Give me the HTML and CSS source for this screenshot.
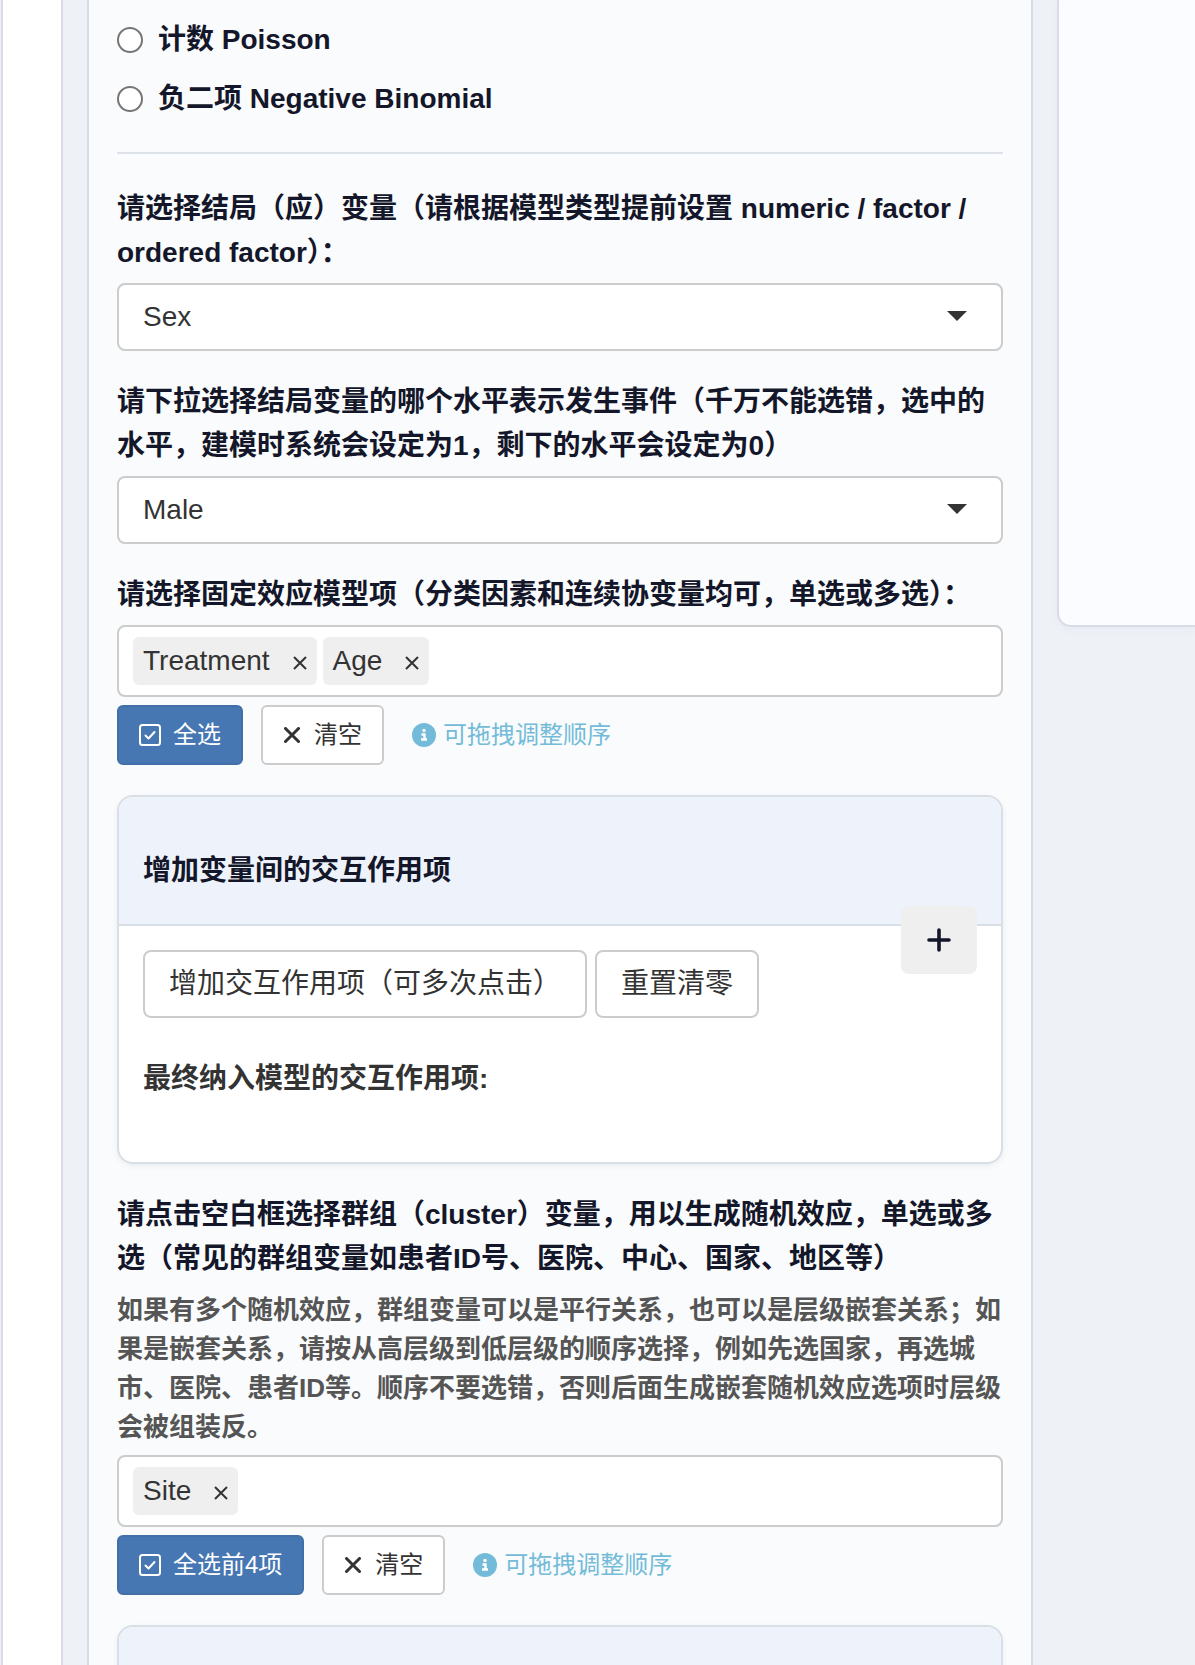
FILE: index.html
```html
<!DOCTYPE html>
<html lang="zh-CN">

<head>
    <meta charset="utf-8">
    <title>混合效应模型</title>
    <link rel="stylesheet" href="styles.css">
</head>

<body>
    <svg class="sprite" aria-hidden="true">
        <symbol id="icon-check" viewBox="0 0 22 22">
            <rect x="1" y="1" width="20" height="20" rx="2.5" fill="none" stroke="currentColor" stroke-width="2" />
            <path d="M6.5 11.5l3 3 6-6.5" fill="none" stroke="currentColor" stroke-width="2" stroke-linecap="round" stroke-linejoin="round" />
        </symbol>
        <symbol id="icon-cross" viewBox="0 0 16 16">
            <path d="M1.5 1.5l13 13M14.5 1.5l-13 13" fill="none" stroke="currentColor" stroke-width="3" stroke-linecap="round" />
        </symbol>
        <symbol id="icon-remove" viewBox="0 0 14 14">
            <path d="M1 1l12 12M13 1L1 13" fill="none" stroke="currentColor" stroke-width="2" />
        </symbol>
        <symbol id="icon-info" viewBox="0 0 24 24">
            <circle cx="12" cy="12" r="12" fill="currentColor" />
            <circle cx="12" cy="7.5" r="1.7" fill="#fff" />
            <path d="M9.5 11.5h3v5M9 16.5h6" fill="none" stroke="#fff" stroke-width="2.4" />
        </symbol>
        <symbol id="icon-plus" viewBox="0 0 24 24">
            <path d="M12 2v20M2 12h20" fill="none" stroke="currentColor" stroke-width="3.6" stroke-linecap="round" />
        </symbol>
        <symbol id="icon-caret" viewBox="0 0 20 10">
            <path d="M0 0h20L10 10z" fill="currentColor" />
        </symbol>
    </svg>

    <div class="page">
        <aside class="sidebar"></aside>

        <main class="panel">
            <form>
                <div class="radio-group">
                    <label class="radio"><input type="radio" name="modelType" value="poisson">计数 Poisson</label>
                    <label class="radio"><input type="radio" name="modelType" value="nb">负二项 Negative Binomial</label>
                </div>

                <hr>

                <div class="form-group">
                    <label class="control-label" for="outcome">请选择结局（应）变量（请根据模型类型提前设置 numeric / factor / ordered factor）：</label>
                    <div class="select-wrap">
                        <select id="outcome">
                            <option>Sex</option>
                        </select>
                        <svg class="caret"><use href="#icon-caret" /></svg>
                    </div>
                </div>

                <div class="form-group">
                    <label class="control-label" for="eventLevel">请下拉选择结局变量的哪个水平表示发生事件（千万不能选错，选中的水平，建模时系统会设定为1，剩下的水平会设定为0）</label>
                    <div class="select-wrap">
                        <select id="eventLevel">
                            <option>Male</option>
                        </select>
                        <svg class="caret"><use href="#icon-caret" /></svg>
                    </div>
                </div>

                <div class="form-group">
                    <label class="control-label" for="fixedTerms">请选择固定效应模型项（分类因素和连续协变量均可，单选或多选）：</label>
                    <div class="multi">
                        <span class="chip">Treatment<button type="button" aria-label="移除 Treatment"><svg><use href="#icon-remove" /></svg></button></span>
                        <span class="chip">Age<button type="button" aria-label="移除 Age"><svg><use href="#icon-remove" /></svg></button></span>
                        <input type="text" id="fixedTerms">
                    </div>
                    <div class="actions">
                        <button type="button" class="btn-small primary"><svg class="check"><use href="#icon-check" /></svg>全选</button>
                        <button type="button" class="btn-small"><svg class="cross"><use href="#icon-cross" /></svg>清空</button>
                        <span class="hint"><svg><use href="#icon-info" /></svg>可拖拽调整顺序</span>
                    </div>
                </div>

                <section class="card">
                    <div class="card-header">
                        <h3>增加变量间的交互作用项</h3>
                    </div>
                    <button type="button" class="collapse-btn" aria-label="展开"><svg><use href="#icon-plus" /></svg></button>
                    <div class="card-body">
                        <div class="card-buttons">
                            <button type="button" class="btn">增加交互作用项（可多次点击）</button>
                            <button type="button" class="btn">重置清零</button>
                        </div>
                        <p>最终纳入模型的交互作用项:</p>
                    </div>
                </section>

                <div class="form-group">
                    <label class="control-label" for="clusterTerms">请点击空白框选择群组（cluster）变量，用以生成随机效应，单选或多选（常见的群组变量如患者ID号、医院、中心、国家、地区等）</label>
                    <p class="help">如果有多个随机效应，群组变量可以是平行关系，也可以是层级嵌套关系；如果是嵌套关系，请按从高层级到低层级的顺序选择，例如先选国家，再选城市、医院、患者ID等。顺序不要选错，否则后面生成嵌套随机效应选项时层级会被组装反。</p>
                    <div class="multi">
                        <span class="chip">Site<button type="button" aria-label="移除 Site"><svg><use href="#icon-remove" /></svg></button></span>
                        <input type="text" id="clusterTerms">
                    </div>
                    <div class="actions">
                        <button type="button" class="btn-small primary"><svg class="check"><use href="#icon-check" /></svg>全选前4项</button>
                        <button type="button" class="btn-small"><svg class="cross"><use href="#icon-cross" /></svg>清空</button>
                        <span class="hint"><svg><use href="#icon-info" /></svg>可拖拽调整顺序</span>
                    </div>
                </div>

                <section class="card">
                    <div class="card-header"></div>
                </section>
            </form>
        </main>

        <section class="result"></section>
    </div>
</body>

</html>
```

FILE: styles.css
```css
* {
    box-sizing: border-box;
}

body {
    margin: 0;
    background-color: #eef1f6;
    color: #333;
    font-family: "Liberation Sans", "Noto Sans CJK SC", sans-serif;
    font-size: 28px;
    line-height: 44px;
}

button,
input,
select {
    font: inherit;
    color: inherit;
}

button {
    cursor: pointer;
}

.sprite {
    display: none;
}

/* 三栏：左侧导航、参数面板、结果区 */
.page {
    display: grid;
    grid-template-columns: 62px minmax(0, 1fr) 138px;
    gap: 24px;
    height: 100vh;
    padding-left: 1px;
    overflow: hidden;
}

.sidebar {
    background-color: #fff;
    border: solid #d9dce6;
    border-width: 0 2px;
}

.panel {
    padding: 18px 28px 0;
    background-color: #f9fbfc;
    border: solid #d9dce6;
    border-width: 0 2px;
}

.result {
    height: 627px;
    background-color: #fafcff;
    border: solid #d9dce6;
    border-width: 0 0 2px 2px;
    border-bottom-left-radius: 14px;
    box-shadow: 0 2px 8px rgba(80, 100, 200, 0.06);
}

/* 单选 */
.radio-group {
    display: flex;
    flex-direction: column;
    gap: 15px;
}

.radio {
    display: flex;
    align-items: center;
    gap: 15px;
    color: #14162a;
    font-weight: bold;
}

.radio input {
    appearance: none;
    width: 26px;
    height: 26px;
    margin: 0;
    background-color: #fff;
    border: 2px solid #767676;
    border-radius: 50%;
}

.radio input:checked {
    border-width: 8px;
}

hr {
    height: 2px;
    margin: 31px 0 33px;
    background-color: #dde2e8;
    border: none;
}

.form-group {
    margin-bottom: 29px;
}

.control-label {
    display: block;
    margin-bottom: 8px;
    color: #14162a;
    font-weight: bold;
}

.help {
    margin: 10px 0 8px;
    color: #555;
    font-size: 26px;
    font-weight: bold;
    line-height: 39px;
}

/* 下拉框 */
.select-wrap {
    position: relative;
}

select {
    appearance: none;
    display: block;
    width: 100%;
    height: 68px;
    padding: 0 64px 0 24px;
    background-color: #fff;
    border: 2px solid #ccc;
    border-radius: 8px;
}

.caret {
    position: absolute;
    top: 28px;
    right: 36px;
    width: 20px;
    height: 10px;
    pointer-events: none;
}

/* 多选框 */
.multi {
    display: flex;
    gap: 6px;
    padding: 10px 14px;
    background-color: #fff;
    border: 2px solid #ccc;
    border-radius: 8px;
}

.multi input {
    flex: 1;
    min-width: 0;
    height: 48px;
    padding: 0;
    background: none;
    border: none;
    outline: none;
}

.chip {
    display: flex;
    align-items: center;
    gap: 23px;
    height: 48px;
    padding: 0 10px;
    background-color: #efefef;
    border-radius: 6px;
}

.chip button {
    display: flex;
    padding: 4px 0 0;
    background: none;
    border: none;
}

.chip svg {
    width: 14px;
    height: 14px;
}

/* 按钮 */
.actions {
    display: flex;
    align-items: center;
    gap: 18px;
    margin: 8px 0 30px;
    font-size: 24px;
}

.btn,
.btn-small {
    background-color: #fff;
    border: 2px solid #ccc;
    border-radius: 8px;
}

.btn {
    height: 68px;
    padding: 0 24px;
}

.btn-small {
    display: flex;
    align-items: center;
    gap: 12px;
    height: 60px;
    padding: 0 20px;
    border-radius: 6px;
}

.primary {
    background-color: #4677b3;
    border-color: #426fa8;
    color: #fff;
}

.check {
    width: 22px;
    height: 22px;
}

.cross {
    width: 16px;
    height: 16px;
    margin: 0 2px 0 1px;
}

.hint {
    display: flex;
    align-items: center;
    gap: 7px;
    margin-left: 10px;
    color: #74bbd9;
}

.hint svg {
    width: 24px;
    height: 24px;
}

/* 折叠卡片 */
.card {
    position: relative;
    margin-bottom: 29px;
    background-color: #fff;
    border: 2px solid #d9dfe6;
    border-radius: 16px;
    box-shadow: 0 2px 6px rgba(20, 30, 60, 0.06);
}

.card-header {
    min-height: 129px;
    padding: 52px 24px 31px;
    background-color: #eef3fb;
    border-bottom: 2px solid #d9dfe6;
    border-radius: 14px 14px 0 0;
}

.card-header h3 {
    margin: 0;
    color: #14162a;
    font-size: 28px;
    font-weight: bold;
}

.collapse-btn {
    position: absolute;
    top: 109px;
    right: 24px;
    display: flex;
    align-items: center;
    justify-content: center;
    width: 76px;
    height: 68px;
    padding: 0;
    background-color: #efefef;
    border: none;
    border-radius: 8px;
    color: #14162a;
}

.collapse-btn svg {
    width: 24px;
    height: 24px;
}

.card-body {
    padding: 24px 24px 61px;
}

.card-buttons {
    display: flex;
    gap: 8px;
}

.card-body p {
    margin: 39px 0 0;
    font-weight: bold;
}
```
